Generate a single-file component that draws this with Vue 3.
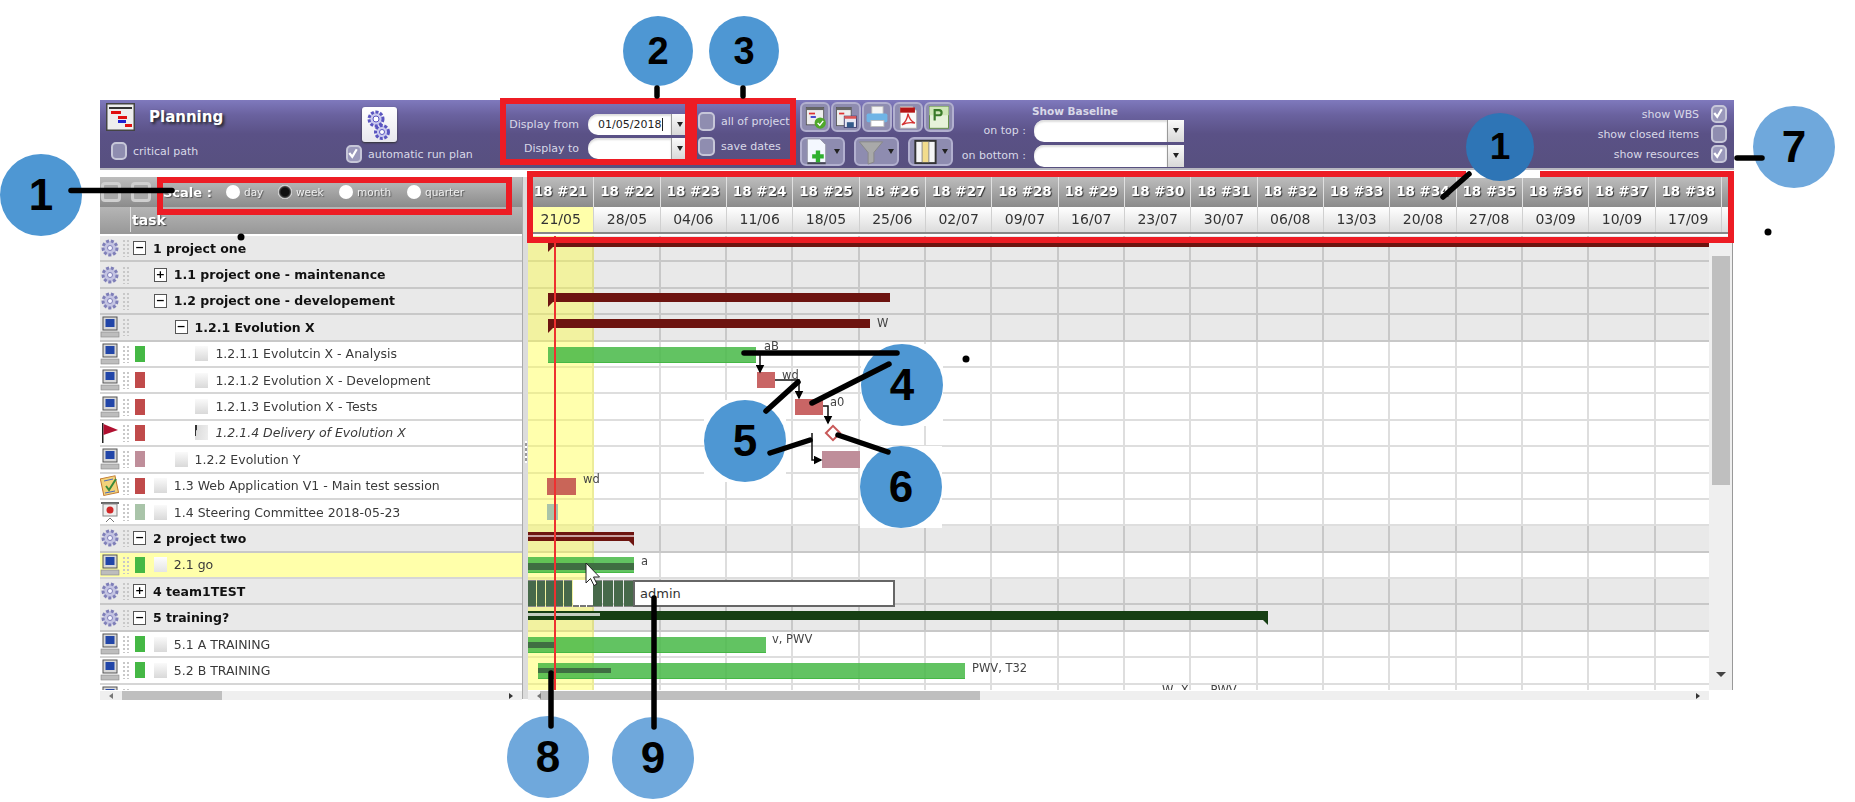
<template>
    <div class="page">
        <div class="planning">
            <!-- toolbar -->
            <div class="toolbar">
                <div class="tb_title">
                    <div class="title_row">
                        <svg class="plan_icon" viewBox="0 0 29 28">
                            <rect x="0.5" y="0.5" width="28" height="27" fill="#eee" stroke="#444" stroke-width="2" />
                            <rect x="3" y="4" width="23" height="2" fill="#333" />
                            <rect x="5" y="8" width="10" height="3" fill="#e01010" />
                            <rect x="12" y="13" width="9" height="3" fill="#e01010" />
                            <rect x="12" y="17" width="8" height="3" fill="#2020d0" />
                            <rect x="19" y="21" width="7" height="3" fill="#e01010" />
                        </svg>
                        <span class="title">Planning</span>
                    </div>
                    <label class="check_label critical">
                        <span class="check"></span>
                        critical path
                    </label>
                </div>
                <div class="tb_run">
                    <div class="gear_button">
                        <svg viewBox="0 0 35 35" width="35" height="35">
                            <circle cx="14" cy="12" r="7" fill="#c9c9ee" stroke="#5a55c0" stroke-width="3" stroke-dasharray="3 1.6" />
                            <circle cx="14" cy="12" r="3" fill="#fff" stroke="#5a55c0" />
                            <circle cx="20" cy="25" r="6.5" fill="#c9c9ee" stroke="#5a55c0" stroke-width="3" stroke-dasharray="3 1.6" />
                            <circle cx="20" cy="25" r="2.5" fill="#fff" stroke="#5a55c0" />
                        </svg>
                    </div>
                    <label class="check_label">
                        <span class="check checked">
                            <svg viewBox="0 0 16 18"><path d="M3 9l4 5 6-10" fill="none" stroke="#fff" stroke-width="3" /></svg>
                        </span>
                        automatic run plan
                    </label>
                </div>
                <div class="tb_dates">
                    <span class="field_label">Display from</span>
                    <div class="combo date_combo">
                        <span class="combo_value"><span class="caret">01/05/2018</span></span>
                        <span class="combo_arrow"></span>
                    </div>
                    <span class="field_label">Display to</span>
                    <div class="combo date_combo">
                        <span class="combo_value"></span>
                        <span class="combo_arrow"></span>
                    </div>
                </div>
                <div class="tb_checks">
                    <label class="check_label"><span class="check"></span>all of project</label>
                    <label class="check_label"><span class="check"></span>save dates</label>
                </div>
                <div class="tb_icons">
                    <div class="icon_row">
                        <div class="icon_button">
                            <svg viewBox="0 0 30 30">
                                <rect x="5" y="4" width="20" height="20" fill="#eee" stroke="#555" />
                                <rect x="5" y="4" width="20" height="3" fill="#666" />
                                <rect x="8" y="10" width="7" height="2" fill="#d33" />
                                <rect x="10" y="14" width="6" height="2" fill="#33c" />
                                <circle cx="21" cy="22" r="6.5" fill="#4ea82a" />
                                <path d="M18 22l2.500 2.500 4-5" fill="none" stroke="#fff" stroke-width="1.600" />
                            </svg>
                        </div>
                        <div class="icon_button">
                            <svg viewBox="0 0 30 30">
                                <rect x="4" y="4" width="17" height="21" fill="#eee" stroke="#555" />
                                <rect x="4" y="4" width="17" height="3" fill="#666" />
                                <rect x="7" y="10" width="6" height="2" fill="#d33" />
                                <rect x="13" y="14" width="14" height="13" fill="#e8e8f4" stroke="#336" />
                                <rect x="16" y="21" width="8" height="6" fill="#335a8a" />
                                <rect x="13" y="14" width="14" height="3" fill="#d55" />
                            </svg>
                        </div>
                        <div class="icon_button">
                            <svg viewBox="0 0 30 30">
                                <rect x="9" y="3" width="13" height="9" fill="#f4f4f4" stroke="#bbb" />
                                <rect x="3" y="11" width="24" height="10" rx="2" fill="#6fb4e6" />
                                <rect x="8" y="19" width="15" height="7" fill="#fff" stroke="#bbb" />
                            </svg>
                        </div>
                        <div class="icon_button">
                            <svg viewBox="0 0 30 30">
                                <path d="M6 3h14l5 5v20H6z" fill="#fafafa" stroke="#aaa" />
                                <rect x="6" y="4" width="17" height="6" fill="#b51515" />
                                <path d="M15 11c-1 7-4 11-7 13 4-2 10-3 15-2-4-2-7-6-8-11z" fill="none" stroke="#d43030" stroke-width="1.500" />
                            </svg>
                        </div>
                        <div class="icon_button">
                            <svg viewBox="0 0 30 30">
                                <rect x="4" y="3" width="22" height="25" fill="#e6f2da" stroke="#5a8a3a" />
                                <rect x="4" y="3" width="22" height="10" fill="#cfe6b8" />
                                <path d="M10 19V7h5c4 0 4 6 0 6h-5" fill="none" stroke="#3a7a2a" stroke-width="2.500" />
                            </svg>
                        </div>
                    </div>
                    <div class="icon_row second">
                        <div class="icon_button wide">
                            <svg viewBox="0 0 28 30" width="28" height="29">
                                <path d="M4 2h13l6 6v20H4z" fill="#f4f8ff" stroke="#99a" />
                                <rect x="4" y="26" width="19" height="2" fill="#445" />
                                <path d="M15 14v12M9 20h12" stroke="#2fb02f" stroke-width="4.500" />
                            </svg>
                            <span class="mini_arrow"></span>
                        </div>
                        <div class="icon_button wide">
                            <svg viewBox="0 0 28 30" width="28" height="29">
                                <path d="M2 5h24l-9 11v10l-6 2V16z" fill="#a9a9a9" stroke="#888" />
                            </svg>
                            <span class="mini_arrow"></span>
                        </div>
                        <div class="icon_button wide">
                            <svg viewBox="0 0 28 30" width="28" height="29">
                                <rect x="4" y="4" width="21" height="23" fill="#f6f6f6" stroke="#333" stroke-width="2" />
                                <rect x="11" y="5" width="7" height="21" fill="#f2dc8c" />
                                <path d="M11 5v21M18 5v21" stroke="#888" />
                            </svg>
                            <span class="mini_arrow"></span>
                        </div>
                    </div>
                </div>
                <div class="tb_baseline">
                    <div class="baseline_title">Show Baseline</div>
                    <div class="baseline_grid">
                        <span class="field_label">on top :</span>
                        <div class="combo base_combo">
                            <span class="combo_value"></span>
                            <span class="combo_arrow"></span>
                        </div>
                        <span class="field_label">on bottom :</span>
                        <div class="combo base_combo">
                            <span class="combo_value"></span>
                            <span class="combo_arrow"></span>
                        </div>
                    </div>
                </div>
                <div class="tb_show">
                    <label class="check_label reverse" v-for="item in showOptions" :key="item.text">
                        {{ item.text }}
                        <span class="check" :class="{ checked: item.on }">
                            <svg v-if="item.on" viewBox="0 0 16 18"><path d="M3 9l4 5 6-10" fill="none" stroke="#fff" stroke-width="3" /></svg>
                        </span>
                    </label>
                </div>
            </div>
            <div class="toolbar_gap"></div>

            <div class="content">
                <!-- left task list -->
                <div class="left_panel">
                    <div class="scale_row">
                        <span class="square_button"></span>
                        <span class="square_button"></span>
                        <span class="scale_label">Scale :</span>
                        <span class="radio_item" v-for="r in scales" :key="r">
                            <span class="radio" :class="{ selected: r === 'week' }"></span>{{ r }}
                        </span>
                    </div>
                    <div class="task_head">
                        <span class="task_head_blank"></span>
                        <span class="task_head_text">task</span>
                    </div>
                    <div class="left_body">
                        <div v-for="(row, idx) in rows" :key="idx" class="task_row" :class="{ group: row.group, current: row.current }">
                            <svg class="row_icon" viewBox="0 0 20 24">
                                <template v-if="row.icon === 'gear'">
                                    <circle cx="10" cy="12" r="7" fill="#c4c4e2" stroke="#7f7fb8" stroke-width="3" stroke-dasharray="3 1.800" />
                                    <circle cx="10" cy="12" r="2.500" fill="#f4f4ff" stroke="#7f7fb8" />
                                </template>
                                <template v-else-if="row.icon === 'pc'">
                                    <rect x="3" y="2" width="14" height="13" fill="#d8d8d8" stroke="#555" />
                                    <rect x="5.500" y="4" width="9" height="8" fill="#2246a8" />
                                    <rect x="1" y="17" width="18" height="5" fill="#bdbdbd" stroke="#888" stroke-width="0.600" />
                                </template>
                                <template v-else-if="row.icon === 'flag'">
                                    <rect x="2" y="2" width="1.500" height="20" fill="#222" />
                                    <path d="M3.500 3L18 9 3.500 14z" fill="#b01030" />
                                </template>
                                <template v-else-if="row.icon === 'test'">
                                    <rect x="2" y="3" width="15" height="17" fill="#f2d27a" stroke="#c07830" transform="rotate(-12 10 12)" />
                                    <path d="M6 12l3 4 7-11" fill="none" stroke="#3a8a3a" stroke-width="2" />
                                    <path d="M4 7l9-2M5 19l10-2" stroke="#4a6ac0" />
                                </template>
                                <template v-else-if="row.icon === 'meet'">
                                    <rect x="1" y="2" width="18" height="2" fill="#666" />
                                    <rect x="3" y="4" width="14" height="12" fill="#eee" stroke="#888" />
                                    <circle cx="10" cy="10" r="3.500" fill="#d02828" />
                                    <path d="M6 22l4-4 4 4" fill="none" stroke="#777" />
                                </template>
                            </svg>
                            <span class="drag_dots"></span>
                            <template v-if="row.name">
                                <span class="status" :style="{ background: row.color || 'transparent' }"></span>
                                <span class="indent" :style="{ width: row.level * 20.800 + 'px' }"></span>
                                <span v-if="row.toggle" class="toggle">{{ row.toggle }}</span>
                                <span v-else class="leaf" :class="{ milestone: row.italic }"></span>
                                <span class="task_name" :class="{ italic: row.italic }">{{ row.name }}</span>
                            </template>
                        </div>
                    </div>
                    <div class="hscroll left_scroll"><span class="hthumb"></span></div>
                </div>
                <div class="splitter"><span class="split_grip"></span></div>

                <!-- gantt -->
                <div class="right_panel">
                    <div class="week_row">
                        <span v-for="w in weeks" :key="w.no" class="week_cell">18 #{{ w.no }}</span>
                    </div>
                    <div class="date_row">
                        <span v-for="(w, i) in weeks" :key="w.no" class="date_cell" :class="{ today: i === 0 }">{{ w.date }}</span>
                    </div>
                    <div class="date_line"></div>
                    <div class="gantt_wrap">
                        <div class="gantt_body">
                            <div class="today_col"></div>
                            <div v-for="(row, idx) in rows" :key="idx" class="gantt_row" :class="{ group: row.group }">
                                <template v-for="(bar, i) in row.bars || []" :key="i">
                                    <span class="bar" :class="bar.type" :style="barStyle(bar)"></span>
                                </template>
                                <span v-if="row.label" class="bar_label" :style="{ left: row.label.x + 'px', top: row.label.y + 'px' }">{{ row.label.text }}</span>
                                <div v-if="row.team" class="team_load">
                                    <span v-for="n in 5" :key="'a' + n" class="load_block"></span>
                                    <span class="load_empty"></span>
                                    <span v-for="n in 4" :key="'b' + n" class="load_block later"></span>
                                    <span class="team_name">admin</span>
                                </div>
                            </div>
                            <div class="red_line"></div>
                        </div>
                        <div class="vscroll">
                            <span class="up_arrow"></span>
                            <span class="vthumb"></span>
                            <span class="down_arrow"></span>
                        </div>
                    </div>
                    <div class="hscroll right_scroll"><span class="hthumb"></span></div>
                </div>
            </div>
        </div>

        <!-- red frames of the annotated picture -->
        <div v-for="f in frames" :key="f.id" class="frame" :style="boxStyle(f)"></div>
        <div class="frame_gap"></div>

        <div v-for="b in badges" :key="b.id" class="badge_back" :style="badgeBack(b)"></div>
        <div v-for="b in badges" :key="b.id + 'n'" class="badge" :class="b.tone" :style="badgeStyle(b)">{{ b.n }}</div>

        <!-- dependency arrows, callout lines -->
        <svg class="overlay" viewBox="0 0 1855 802">
            <defs>
                <marker id="head" markerWidth="6" markerHeight="6" refX="5" refY="3" orient="auto">
                    <path d="M0 0L6 3L0 6z" fill="#000" />
                </marker>
            </defs>
            <g fill="none" stroke="#111" stroke-width="1.500" marker-end="url(#head)">
                <path d="M760 353V372" />
                <path d="M775 380H799V398" />
                <path d="M823 406H828V423" />
                <path d="M812 433V460H821" />
            </g>
            <rect x="828" y="428" width="10" height="10" fill="#fff" stroke="#c85858" stroke-width="2" transform="rotate(45 833 433)" />
            <g stroke="#000" stroke-width="5.500" stroke-linecap="round">
                <path v-for="(l, i) in callouts" :key="i" :d="l" />
            </g>
            <g fill="#000">
                <circle cx="241" cy="237" r="3.500" />
                <circle cx="966" cy="359" r="3.500" />
                <circle cx="1768" cy="232" r="3.500" />
            </g>
            <path d="M586 563l0 20 4.500-4.500 3.500 7 3-1.500-3.500-7 6 0z" fill="#fff" stroke="#222" />
        </svg>
    </div>
</template>

<script setup>
const showOptions = [
    { text: 'show WBS', on: true },
    { text: 'show closed items', on: false },
    { text: 'show resources', on: true },
]
const scales = ['day', 'week', 'month', 'quarter']

const dates = ['21/05', '28/05', '04/06', '11/06', '18/05', '25/06', '02/07', '09/07', '16/07', '23/07', '30/07', '06/08', '13/03', '20/08', '27/08', '03/09', '10/09', '17/09']
const weeks = dates.map((date, i) => ({ no: 21 + i, date }))

const RED = '#c04a4a'
const GREEN = '#45b845'

// bar x is in page pixels, minus the gantt left edge (528)
const bx = (x) => x - 528

const rows = [
    { name: '1 project one', level: 0, group: true, icon: 'gear', toggle: '−', bars: [{ type: 'sum_red', x: bx(548), w: 1162, y: 3, h: 8 }] },
    { name: '1.1 project one - maintenance', level: 1, group: true, icon: 'gear', toggle: '+' },
    { name: '1.2 project one - developement', level: 1, group: true, icon: 'gear', toggle: '−', bars: [{ type: 'sum_red', x: bx(548), w: 342, y: 4, h: 9 }] },
    { name: '1.2.1 Evolution X', level: 2, group: true, icon: 'pc', toggle: '−', bars: [{ type: 'sum_red', x: bx(548), w: 322, y: 4, h: 9 }], label: { text: 'W', x: bx(877), y: 1 } },
    { name: '1.2.1.1 Evolutcin X - Analysis', level: 3, icon: 'pc', color: GREEN, bars: [{ type: 'green', x: bx(548), w: 208, y: 5, h: 16 }], label: { text: 'aB', x: bx(764), y: -3 } },
    { name: '1.2.1.2 Evolution X - Development', level: 3, icon: 'pc', color: RED, bars: [{ type: 'red', x: bx(757), w: 18, y: 4, h: 16 }], label: { text: 'wd', x: bx(782), y: 0 } },
    { name: '1.2.1.3 Evolution X - Tests', level: 3, icon: 'pc', color: RED, bars: [{ type: 'red', x: bx(795), w: 28, y: 5, h: 16 }], label: { text: 'a0', x: bx(830), y: 1 } },
    { name: '1.2.1.4 Delivery of Evolution X', level: 3, italic: true, icon: 'flag', color: RED },
    { name: '1.2.2 Evolution Y', level: 2, icon: 'pc', color: '#bf8e9a', bars: [{ type: 'pink', x: bx(822), w: 38, y: 4, h: 17 }] },
    { name: '1.3 Web Application V1 - Main test session', level: 1, icon: 'test', color: RED, bars: [{ type: 'red', x: bx(547), w: 29, y: 4, h: 17 }], label: { text: 'wd', x: bx(583), y: -2 } },
    { name: '1.4 Steering Committee 2018-05-23', level: 1, icon: 'meet', color: '#a9c4a9', bars: [{ type: 'pale', x: bx(547), w: 11, y: 4, h: 16 }] },
    { name: '2 project two', level: 0, group: true, icon: 'gear', toggle: '−', bars: [{ type: 'sum_red_line', x: 0, w: 106, y: 6, h: 9 }] },
    { name: '2.1 go', level: 1, current: true, icon: 'pc', color: GREEN, bars: [{ type: 'green', x: 0, w: 106, y: 4, h: 16 }, { type: 'dark', x: 0, w: 106, y: 10, h: 7 }], label: { text: 'a', x: bx(641), y: 1 } },
    { name: '4 team1TEST', level: 0, group: true, icon: 'gear', toggle: '+', team: true },
    { name: '5 training?', level: 0, group: true, icon: 'gear', toggle: '−', bars: [{ type: 'sum_green', x: 0, w: 740, y: 6, h: 9 }, { type: 'pale_line', x: 0, w: 72, y: 8, h: 3 }] },
    { name: '5.1 A TRAINING', level: 1, icon: 'pc', color: GREEN, bars: [{ type: 'green', x: 0, w: 238, y: 5, h: 16 }, { type: 'dark', x: 0, w: 28, y: 10, h: 6 }], label: { text: 'v, PWV', x: bx(772), y: 0 } },
    { name: '5.2 B TRAINING', level: 1, icon: 'pc', color: GREEN, bars: [{ type: 'green', x: bx(538), w: 427, y: 5, h: 16 }, { type: 'dark', x: bx(538), w: 73, y: 10, h: 5 }], label: { text: 'PWV, T32', x: bx(972), y: 3 } },
    { name: '', level: 1, icon: 'pc', label: { text: 'W, X, .., PWV', x: bx(1162), y: -2 } },
]

const barStyle = (bar) => ({
    left: bar.x + 'px',
    width: bar.w + 'px',
    top: bar.y + 'px',
    height: bar.h + 'px',
})

const frames = [
    { id: 'scale', x: 157, y: 177, w: 355, h: 38 },
    { id: 'dates', x: 500, y: 98, w: 191, h: 67 },
    { id: 'checks', x: 691, y: 98, w: 105, h: 67 },
    { id: 'header', x: 527, y: 171, w: 1207, h: 72 },
]
const boxStyle = (f) => ({ left: f.x + 'px', top: f.y + 'px', width: f.w + 'px', height: f.h + 'px' })

const callouts = [
    'M657 88V96',
    'M743 88V96',
    'M71 190.500H172',
    'M1469 174L1443 197',
    'M1737 158H1762',
    'M744 353H897',
    'M889 364L812 403',
    'M766 411L798 382',
    'M770 453L810 440',
    'M838 435L888 452',
    'M551 673V726',
    'M654 598V727',
]

const badges = [
    { id: 'a', n: 1, x: 41, y: 195, r: 41, tone: 'mid' },
    { id: 'b', n: 2, x: 658, y: 51, r: 35, tone: 'mid' },
    { id: 'c', n: 3, x: 744, y: 51, r: 35, tone: 'mid' },
    { id: 'd', n: 1, x: 1500, y: 147, r: 34, tone: 'deep', noBack: true },
    { id: 'e', n: 7, x: 1794, y: 147, r: 41, tone: 'light' },
    { id: 'f', n: 4, x: 902, y: 385, r: 41, tone: 'mid' },
    { id: 'g', n: 5, x: 745, y: 441, r: 41, tone: 'mid' },
    { id: 'h', n: 6, x: 901, y: 487, r: 41, tone: 'mid' },
    { id: 'i', n: 8, x: 548, y: 757, r: 41, tone: 'light' },
    { id: 'j', n: 9, x: 653, y: 758, r: 41, tone: 'light' },
]
const badgeStyle = (b) => ({
    left: b.x - b.r + 'px',
    top: b.y - b.r + 'px',
    width: b.r * 2 + 'px',
    height: b.r * 2 + 'px',
    fontSize: Math.round(b.r * 1.08) + 'px',
})
const badgeBack = (b) => (b.noBack ? { display: 'none' } : badgeStyle(b))
</script>

<style>
html,
body {
    margin: 0;
    background: #fff;
}
</style>

<style scoped>
* {
    box-sizing: border-box;
}
.page {
    position: relative;
    width: 1855px;
    height: 802px;
    overflow: hidden;
    padding: 100px 0 0 100px;
    background: #fff;
    font-family: 'DejaVu Sans', sans-serif;
}
.planning {
    width: 1634px;
    height: 599px;
    filter: blur(0.45px);
}

/* toolbar */
.toolbar {
    display: flex;
    height: 68px;
    background: linear-gradient(#7f79bd 0, #6a629f 22%, #5a5186 50%, #57507f 100%);
    color: #d9d9e8;
    font-size: 11px;
}
.toolbar_gap {
    height: 9px;
    border-top: 2px solid #b8b8c0;
    background: #fff;
}
.tb_title {
    width: 246px;
    padding: 2px 0 0 6px;
}
.title_row {
    display: flex;
    align-items: center;
    gap: 14px;
    height: 30px;
}
.plan_icon {
    width: 29px;
    height: 28px;
}
.title {
    font-size: 15px;
    font-weight: bold;
    color: #fff;
    text-shadow: 2px 2px 3px #222;
}
.check_label {
    display: flex;
    align-items: center;
    gap: 6px;
    white-space: nowrap;
}
.critical {
    margin: 10px 0 0 5px;
}
.check {
    display: block;
    flex: none;
    width: 16px;
    height: 18px;
    border: 2px solid #c6c6d8;
    border-radius: 5px;
    background: #8f8db0;
}
.check.checked {
    background: #9a98bb;
}
.check svg {
    display: block;
    width: 100%;
    height: 100%;
    margin: -1px;
    overflow: visible;
}
.tb_run {
    width: 154px;
    display: flex;
    flex-direction: column;
    align-items: flex-start;
    padding-top: 7px;
}
.gear_button {
    width: 35px;
    height: 35px;
    margin-left: 16px;
    margin-bottom: 3px;
    border-radius: 3px;
    background: linear-gradient(#fff, #e8e8ee);
    box-shadow: 0 1px 2px #333;
}
.tb_dates {
    width: 191px;
    display: grid;
    grid-template-columns: 79px 102px;
    grid-auto-rows: 24px;
    column-gap: 9px;
    align-items: center;
    align-content: start;
    padding-top: 12px;
}
.field_label {
    text-align: right;
    white-space: nowrap;
}
.combo {
    display: flex;
    height: 21px;
}
.combo_value {
    flex: 1;
    background: #fff;
    border-radius: 10px 0 0 10px;
    color: #222;
    font-size: 11px;
    line-height: 21px;
    padding-left: 10px;
    box-shadow: inset 0 2px 2px #ddd;
}
.caret {
    padding-right: 1px;
    border-right: 1px solid #222;
}
.combo_arrow {
    position: relative;
    flex: none;
    width: 19px;
    background: linear-gradient(#fafafa, #d8d8d8);
    border-left: 1px solid #999;
}
.combo_arrow::after,
.mini_arrow {
    content: '';
    border-left: 3.500px solid transparent;
    border-right: 3.500px solid transparent;
    border-top: 5px solid #222;
}
.combo_arrow::after {
    position: absolute;
    left: 5px;
    top: 8px;
}
.tb_checks {
    width: 109px;
    display: flex;
    flex-direction: column;
    gap: 6px;
    padding: 12px 0 0 7px;
}
.tb_checks .check {
    width: 17px;
    height: 19px;
}
.tb_icons {
    width: 231px;
    padding-top: 2px;
}
.icon_row {
    display: flex;
    gap: 1px;
}
.icon_row.second {
    gap: 9px;
    margin-top: 5px;
}
.icon_button {
    display: flex;
    align-items: center;
    width: 30px;
    height: 30px;
    border: 2px solid #b2b0cf;
    border-radius: 6px;
    background: #8e8cb0;
}
.icon_button svg {
    display: block;
}
.icon_button > svg:only-child {
    width: 100%;
    height: 100%;
}
.icon_button.wide {
    width: 45px;
    height: 29px;
    gap: 3px;
    padding-left: 1px;
}
.tb_baseline {
    width: 152px;
    margin-left: -75px;
    flex: none;
}
.baseline_title {
    margin-left: 76px;
    height: 18px;
    line-height: 22px;
    font-size: 10.500px;
    font-weight: bold;
    white-space: nowrap;
}
.baseline_grid {
    display: grid;
    grid-template-columns: 70px 150px;
    grid-auto-rows: 25px;
    column-gap: 8px;
    align-items: center;
    width: 228px;
}
.base_combo {
    height: 22px;
}
.base_combo .combo_arrow {
    width: 17px;
}
.tb_show {
    flex: 1;
    display: flex;
    flex-direction: column;
    align-items: flex-end;
    gap: 2px;
    padding: 5px 7px 0 0;
}
.reverse {
    gap: 12px;
}

/* content */
.content {
    display: flex;
    height: 522px;
}
.left_panel {
    width: 422px;
    flex: none;
}
.scale_row {
    display: flex;
    align-items: center;
    height: 30px;
    padding-left: 1px;
    background: linear-gradient(#bdbdbd, #8b8b8b);
    color: #f0f0f0;
    font-size: 10.500px;
    text-shadow: 1px 1px 1px #555;
}
.square_button {
    width: 20px;
    height: 20px;
    margin-right: 10px;
    border: 3px solid #cfcfcf;
    border-radius: 4px;
    background: #a8a8a8;
}
.scale_label {
    width: 63px;
    margin-left: 2px;
    font-size: 13px;
    font-weight: bold;
    color: #fff;
}
.radio_item {
    display: flex;
    align-items: center;
    gap: 4px;
    margin-right: 0;
}
.radio_item:nth-of-type(4) {
    width: 52px;
}
.radio_item:nth-of-type(5) {
    width: 61px;
}
.radio_item:nth-of-type(6) {
    width: 68px;
}
.radio_item:nth-of-type(7) {
    width: 68px;
}
.radio {
    width: 14px;
    height: 14px;
    border-radius: 50%;
    background: #fff;
}
.radio.selected {
    background: radial-gradient(circle, #111 40%, #444 55%, #fff 70%);
}
.task_head {
    display: flex;
    align-items: center;
    height: 27px;
    background: linear-gradient(#b5b5b5, #9a9a9a);
    border-bottom: 2px solid #999;
}
.task_head_blank {
    width: 31px;
    align-self: stretch;
    border-right: 1px solid #ddd;
}
.task_head_text {
    margin-left: 1px;
    color: #fff;
    font-size: 14px;
    font-weight: bold;
    text-shadow: 1px 1px 1px #444;
}
.left_body {
    height: 454px;
    overflow: hidden;
    margin-top: 2px;
}
.task_row {
    display: flex;
    align-items: center;
    height: 26.400px;
    background: #fff;
    border-bottom: 2px solid #d6d6d6;
    color: #3a3a3a;
    font-size: 12.500px;
    white-space: nowrap;
}
.task_row.group {
    background: #e9e9e9;
    border-bottom-color: #c8c8c8;
    color: #111;
    font-weight: bold;
}
.task_row.current {
    background: #ffffaa;
}
.row_icon {
    flex: none;
    width: 20px;
    height: 24px;
}
.drag_dots {
    flex: none;
    width: 9px;
    height: 18px;
    margin-left: 2px;
    background: radial-gradient(circle, #c8c8c8 1px, transparent 1.200px) 0 0 / 4px 4px;
}
.status {
    flex: none;
    width: 10px;
    height: 16px;
    margin-left: 4px;
}
.indent {
    flex: none;
}
.toggle,
.leaf {
    flex: none;
    display: block;
    width: 13px;
    height: 14px;
    margin-left: -12px;
    margin-right: 7px;
}
.toggle {
    border: 1px solid #555;
    background: #fff;
    color: #000;
    font-size: 11px;
    font-weight: bold;
    line-height: 11px;
    text-align: center;
}
.leaf {
    height: 15px;
    margin-left: -12px;
    background: linear-gradient(#fafafa, #d9d9d9);
}
.current .leaf {
    background: linear-gradient(#fdfdfd, #e4e4e4);
}
.leaf.milestone {
    background: linear-gradient(100deg, #333 0, #333 15%, #ddd 16%, #eee);
}
.italic {
    font-style: italic;
}
.hscroll {
    position: relative;
    display: block;
    height: 9px;
    background: #efefef;
}
.hscroll::before,
.hscroll::after {
    content: '';
    position: absolute;
    top: 2px;
    border-top: 3px solid transparent;
    border-bottom: 3px solid transparent;
}
.hscroll::before {
    left: 9px;
    border-right: 4px solid #777;
}
.hscroll::after {
    right: 9px;
    border-left: 4px solid #333;
}
.left_scroll {
    margin-top: 1px;
}
.hthumb {
    display: block;
    height: 9px;
    background: #bfbfbf;
}
.left_scroll .hthumb {
    width: 100px;
    margin-left: 22px;
}
.splitter {
    width: 6px;
    flex: none;
    background: #dcdcdc;
    border-left: 1px solid #aaa;
    position: relative;
}
.split_grip {
    display: block;
    width: 2px;
    height: 22px;
    margin: 264px auto 0;
    background: repeating-linear-gradient(#fff 0 2px, #999 2px 5px);
}
.right_panel {
    width: 1206px;
    flex: none;
}
.week_row,
.date_row {
    display: grid;
    grid-template-columns: repeat(18, 66.330px) 6px;
}
.week_row {
    height: 30px;
    background: linear-gradient(#bdbdbd, #8b8b8b);
}
.week_cell {
    border-right: 1px solid #e0e0e0;
    color: #fff;
    font-size: 13.500px;
    font-weight: bold;
    line-height: 29px;
    text-align: center;
    text-shadow: 1px 1px 1px #333;
    white-space: nowrap;
    overflow: hidden;
}
.date_row {
    height: 25px;
    background: linear-gradient(#fff, #dcdcdc);
}
.date_cell {
    border-right: 1px solid #d0d0d0;
    color: #333;
    font-size: 14px;
    line-height: 24px;
    text-align: center;
}
.date_cell.today {
    background: #ffffaa;
}
.date_line {
    height: 4px;
    border-top: 2px solid #888;
    background: #fff;
}
.gantt_wrap {
    display: flex;
    height: 454px;
}
.gantt_body {
    position: relative;
    width: 1181px;
    height: 454px;
    overflow: hidden;
    flex: none;
}
.today_col {
    position: absolute;
    left: 0;
    top: 0;
    width: 66px;
    height: 100%;
    background: rgba(255, 255, 60, 0.42);
    z-index: 1;
}
.gantt_row {
    position: relative;
    height: 26.400px;
    background:
        repeating-linear-gradient(90deg, transparent 0, transparent 64.330px, #dedede 64.330px, #dedede 66.330px);
    border-bottom: 2px solid #dedede;
}
.gantt_row.group {
    background:
        repeating-linear-gradient(90deg, transparent 0, transparent 64.330px, #c8c8c8 64.330px, #c8c8c8 66.330px),
        #e9e9e9;
    border-bottom-color: #c8c8c8;
}
.bar {
    position: absolute;
    z-index: 2;
}
.bar.green {
    background: rgba(70, 184, 70, 0.85);
    border-bottom: 1px solid #45b845;
}
.bar.red {
    background: rgba(192, 74, 74, 0.85);
}
.bar.pink {
    background: #bf8e9a;
}
.bar.pale {
    background: #a9c4a9;
}
.bar.dark {
    background: #3f6e42;
}
.bar.sum_red,
.bar.sum_red_line {
    background: #6d1410;
}
.bar.sum_red::after,
.bar.sum_red_line::after,
.bar.sum_green::after {
    content: '';
    position: absolute;
    top: 100%;
    border-top: 5px solid #6d1410;
    border-right: 5px solid transparent;
}
.bar.sum_red::after {
    left: 0;
}
.bar.sum_red_line::after {
    right: 0;
    border-right: 0;
    border-left: 5px solid transparent;
}
.bar.sum_red_line {
    background: linear-gradient(#6d1410 0 35%, #c8a0a0 35% 50%, #6d1410 50%);
}
.bar.sum_green {
    background: #173f14;
}
.bar.sum_green::after {
    right: 0;
    border-right: 0;
    border-left: 5px solid transparent;
    border-top-color: #173f14;
}
.bar.pale_line {
    background: #c4cdc0;
}
.bar_label {
    position: absolute;
    z-index: 2;
    color: #444;
    font-size: 11.500px;
    white-space: nowrap;
}
.team_load {
    position: absolute;
    left: 0;
    top: 1px;
    z-index: 2;
    display: flex;
    height: 27px;
}
.load_block {
    width: 8px;
    margin-right: 1px;
    background: #47694a;
    border-top: 1px solid #888;
    border-bottom: 1px solid #888;
}
.load_block.later {
    width: 9.250px;
}
.load_empty {
    width: 20px;
    background: #fff;
    border-bottom: 2px dashed #777;
}
.team_name {
    width: 262px;
    margin-left: -1px;
    padding-left: 5px;
    border: 2px solid #666;
    background: #fff;
    color: #333;
    font-size: 13px;
    line-height: 24px;
}
.red_line {
    position: absolute;
    left: 26px;
    top: 0;
    width: 2px;
    height: 100%;
    background: #ee3030;
    z-index: 3;
}
.vscroll {
    display: flex;
    flex-direction: column;
    align-items: center;
    width: 24px;
    background: #efefef;
    border-right: 1px solid #999;
}
.up_arrow,
.down_arrow {
    flex: none;
    border-left: 5px solid transparent;
    border-right: 5px solid transparent;
}
.up_arrow {
    margin-top: 2px;
    border-bottom: 5px solid #aaa;
}
.down_arrow {
    margin-top: 187px;
    border-top: 5px solid #444;
}
.vthumb {
    width: 18px;
    height: 229px;
    margin-top: 13px;
    background: #bfbfbf;
}
.right_scroll {
    width: 1181px;
    margin-top: 1px;
}
.right_scroll .hthumb {
    width: 440px;
    margin-left: 12px;
}

/* picture annotations */
.frame {
    position: absolute;
    border: 6px solid #ed1c24;
}
.frame_gap {
    position: absolute;
    left: 1466px;
    top: 171px;
    width: 74px;
    height: 7px;
    background: #fff;
}
.overlay {
    position: absolute;
    left: 0;
    top: 0;
    width: 1855px;
    height: 802px;
}
.badge_back {
    position: absolute;
    background: #fff;
}
.badge {
    position: absolute;
    border-radius: 50%;
    color: #000;
    font-family: 'Liberation Sans', Arial, sans-serif;
    font-weight: bold;
    display: flex;
    align-items: center;
    justify-content: center;
}
.badge.mid {
    background: #4e97d3;
}
.badge.light {
    background: #6fa8dc;
}
.badge.deep {
    background: #2e75b6;
}
</style>
